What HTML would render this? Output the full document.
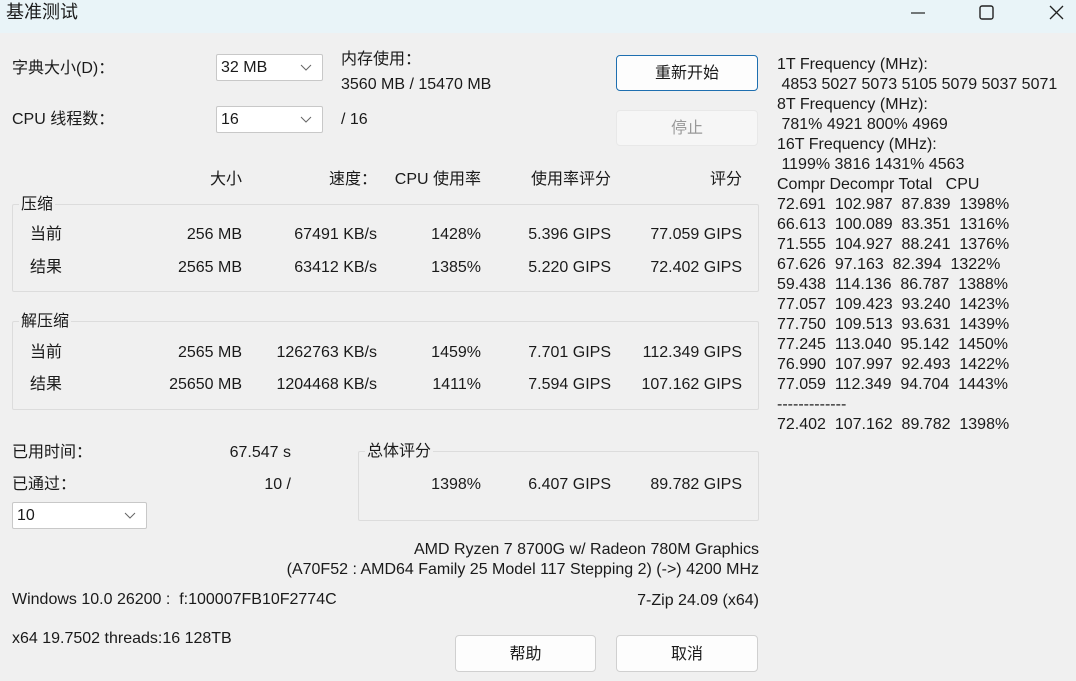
<!DOCTYPE html>
<html><head><meta charset="utf-8"><style>
*{margin:0;padding:0;box-sizing:border-box}
body{width:1076px;height:681px;background:#f0f0f0;font-family:"Liberation Sans","Noto Sans CJK SC",sans-serif;font-size:16px;color:#1a1a1a;position:relative;overflow:hidden}
.a{position:absolute;white-space:nowrap;line-height:20px;margin-top:1px}
.r{text-align:right}
.title{position:absolute;left:0;top:0;width:1076px;height:33px;background:#e9f4f8}
.combo{position:absolute;background:#fff;border:1px solid #c8c8c8;border-radius:2px;height:27px;padding-left:4px;line-height:26px}
.combo svg{position:absolute;right:10px;top:9px}
.btn{position:absolute;background:#fdfdfd;border:1px solid #d0d0d0;border-radius:4px;text-align:center}
.grp{position:absolute;border:1px solid #dcdcdc;border-radius:2px}
.grp span{position:absolute;top:-10px;left:6px;background:#f0f0f0;padding:0 2px;line-height:20px}
</style></head><body>
<div class="title"></div>
<div class="a" style="left:6px;top:0px;font-size:18px;line-height:22px">基准测试</div>
<svg class="a" style="left:905px;top:3px" width="170" height="18"><line x1="6" y1="9" x2="20" y2="9" stroke="#222" stroke-width="1.2"/><rect x="75" y="2" width="13" height="13" rx="2" fill="none" stroke="#222" stroke-width="1.4"/><path d="M145 2L158 15M158 2L145 15" stroke="#222" stroke-width="1.3"/></svg>

<div class="a" style="left:12px;top:58px">字典大小(D)：</div>
<div class="combo" style="left:216px;top:54px;width:107px">32 MB<svg width="12" height="8"><path d="M1 1L6 6L11 1" fill="none" stroke="#666"/></svg></div>
<div class="a" style="left:341px;top:49px">内存使用：</div>
<div class="a" style="left:341px;top:74px">3560 MB / 15470 MB</div>
<div class="a" style="left:12px;top:109px">CPU 线程数：</div>
<div class="combo" style="left:216px;top:106px;width:107px">16<svg width="12" height="8"><path d="M1 1L6 6L11 1" fill="none" stroke="#666"/></svg></div>
<div class="a" style="left:341px;top:109px">/ 16</div>

<div class="btn" style="left:616px;top:55px;width:142px;height:36px;border-color:#1e6fb0;line-height:36px">重新开始</div>
<div class="btn" style="left:616px;top:110px;width:142px;height:36px;border-color:#e8e8e8;background:#f6f6f6;color:#999;line-height:36px">停止</div>

<div class="a r" style="left:142px;width:100px;top:169px">大小</div>
<div class="a r" style="left:257px;width:120px;top:169px">速度：</div>
<div class="a r" style="left:341px;width:140px;top:169px">CPU 使用率</div>
<div class="a r" style="left:491px;width:120px;top:169px">使用率评分</div>
<div class="a r" style="left:622px;width:120px;top:169px">评分</div>

<div class="grp" style="left:12px;top:204px;width:747px;height:88px"><span>压缩</span></div>
<div class="grp" style="left:12px;top:321px;width:747px;height:89px"><span>解压缩</span></div>

<div class="a" style="left:30px;top:224px">当前</div>
<div class="a r" style="left:142px;width:100px;top:224px">256 MB</div>
<div class="a r" style="left:237px;width:140px;top:224px">67491 KB/s</div>
<div class="a r" style="left:381px;width:100px;top:224px">1428%</div>
<div class="a r" style="left:471px;width:140px;top:224px">5.396 GIPS</div>
<div class="a r" style="left:582px;width:160px;top:224px">77.059 GIPS</div>

<div class="a" style="left:30px;top:257px">结果</div>
<div class="a r" style="left:142px;width:100px;top:257px">2565 MB</div>
<div class="a r" style="left:237px;width:140px;top:257px">63412 KB/s</div>
<div class="a r" style="left:381px;width:100px;top:257px">1385%</div>
<div class="a r" style="left:471px;width:140px;top:257px">5.220 GIPS</div>
<div class="a r" style="left:582px;width:160px;top:257px">72.402 GIPS</div>

<div class="a" style="left:30px;top:342px">当前</div>
<div class="a r" style="left:142px;width:100px;top:342px">2565 MB</div>
<div class="a r" style="left:217px;width:160px;top:342px">1262763 KB/s</div>
<div class="a r" style="left:381px;width:100px;top:342px">1459%</div>
<div class="a r" style="left:471px;width:140px;top:342px">7.701 GIPS</div>
<div class="a r" style="left:582px;width:160px;top:342px">112.349 GIPS</div>

<div class="a" style="left:30px;top:374px">结果</div>
<div class="a r" style="left:142px;width:100px;top:374px">25650 MB</div>
<div class="a r" style="left:217px;width:160px;top:374px">1204468 KB/s</div>
<div class="a r" style="left:381px;width:100px;top:374px">1411%</div>
<div class="a r" style="left:471px;width:140px;top:374px">7.594 GIPS</div>
<div class="a r" style="left:582px;width:160px;top:374px">107.162 GIPS</div>

<div class="a" style="left:12px;top:442px">已用时间：</div>
<div class="a r" style="left:171px;width:120px;top:442px">67.547 s</div>
<div class="a" style="left:12px;top:474px">已通过：</div>
<div class="a r" style="left:171px;width:120px;top:474px">10 /</div>
<div class="combo" style="left:12px;top:502px;width:135px">10<svg width="12" height="8"><path d="M1 1L6 6L11 1" fill="none" stroke="#666"/></svg></div>

<div class="grp" style="left:358px;top:451px;width:401px;height:70px"><span>总体评分</span></div>
<div class="a r" style="left:381px;width:100px;top:474px">1398%</div>
<div class="a r" style="left:471px;width:140px;top:474px">6.407 GIPS</div>
<div class="a r" style="left:582px;width:160px;top:474px">89.782 GIPS</div>

<div class="a r" style="left:300px;width:459px;top:539px">AMD Ryzen 7 8700G w/ Radeon 780M Graphics</div>
<div class="a r" style="left:200px;width:559px;top:559px">(A70F52 : AMD64 Family 25 Model 117 Stepping 2) (-&gt;) 4200 MHz</div>
<div class="a" style="left:12px;top:589px">Windows 10.0 26200 :&nbsp; f:100007FB10F2774C</div>
<div class="a r" style="left:500px;width:259px;top:590px">7-Zip 24.09 (x64)</div>
<div class="a" style="left:12px;top:628px">x64 19.7502 threads:16 128TB</div>

<div class="btn" style="left:455px;top:635px;width:141px;height:37px;line-height:37px">帮助</div>
<div class="btn" style="left:616px;top:635px;width:142px;height:37px;line-height:37px">取消</div>

<div class="a" style="left:777px;top:54px;line-height:20px">1T Frequency (MHz):<br>&nbsp;4853 5027 5073 5105 5079 5037 5071<br>8T Frequency (MHz):<br>&nbsp;781% 4921 800% 4969<br>16T Frequency (MHz):<br>&nbsp;1199% 3816 1431% 4563<br>Compr Decompr Total&nbsp;&nbsp; CPU<br>72.691&nbsp; 102.987&nbsp; 87.839&nbsp; 1398%<br>66.613&nbsp; 100.089&nbsp; 83.351&nbsp; 1316%<br>71.555&nbsp; 104.927&nbsp; 88.241&nbsp; 1376%<br>67.626&nbsp; 97.163&nbsp; 82.394&nbsp; 1322%<br>59.438&nbsp; 114.136&nbsp; 86.787&nbsp; 1388%<br>77.057&nbsp; 109.423&nbsp; 93.240&nbsp; 1423%<br>77.750&nbsp; 109.513&nbsp; 93.631&nbsp; 1439%<br>77.245&nbsp; 113.040&nbsp; 95.142&nbsp; 1450%<br>76.990&nbsp; 107.997&nbsp; 92.493&nbsp; 1422%<br>77.059&nbsp; 112.349&nbsp; 94.704&nbsp; 1443%<br>-------------<br>72.402&nbsp; 107.162&nbsp; 89.782&nbsp; 1398%</div>
</body></html>
